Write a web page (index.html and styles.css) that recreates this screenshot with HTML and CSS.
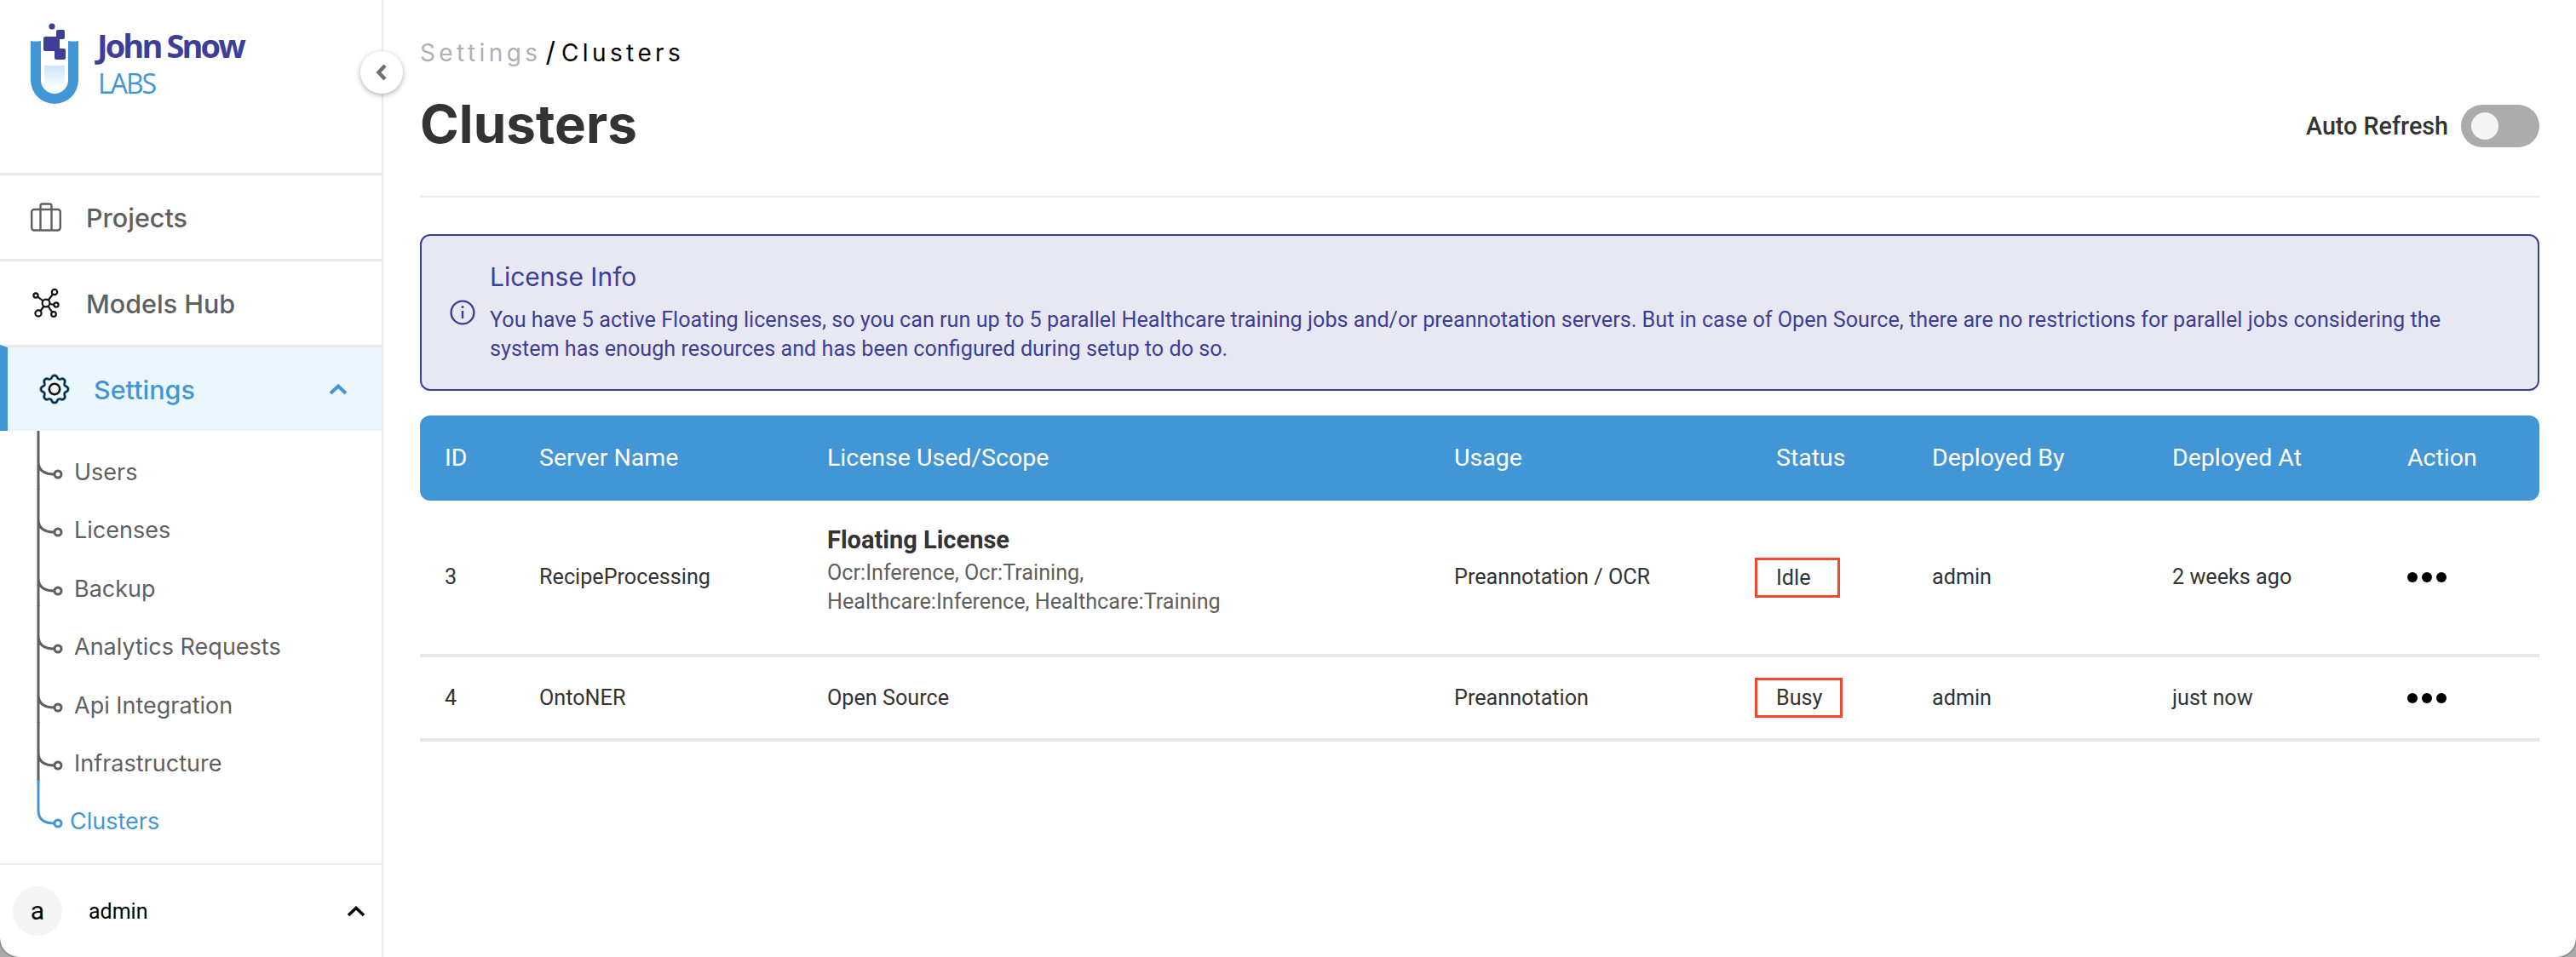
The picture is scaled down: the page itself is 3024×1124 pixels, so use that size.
FILE: index.html
```html
<!DOCTYPE html>
<html>
<head>
  <meta charset="UTF-8">
  <title>Clusters</title>
  <link rel="stylesheet" href="styles.css">
</head>
<body>
<div class="page">
  <aside class="sidebar">
    <div class="logo">
      <svg class="logo-mark" viewBox="0 0 60 100" width="60" height="100">
        <defs>
          <linearGradient id="liquid" x1="0" y1="0" x2="0" y2="1">
            <stop offset="0" stop-color="#cbe4f6"/>
            <stop offset="1" stop-color="#ffffff"/>
          </linearGradient>
        </defs>
        <path d="M2 23 Q8 24 14 23 V69 A16 16 0 0 0 46 69 V23 Q52 24 58 23 V69 A28 28 0 0 1 2 69 Z" fill="#4396d6"/>
        <rect x="18" y="52" width="24" height="28" fill="url(#liquid)"/>
        <circle cx="27" cy="6" r="3.6" fill="#3d3f96"/>
        <path d="M34 10 H40 Q42 10 42 12 V19 Q42 21 40 21 H36 V32 H41 Q43 32 43 34 V43 Q43 45 41 45 H32 Q30 45 30 43 V35 H19 Q17 35 17 33 V20 Q17 18 19 18 H32 V12 Q32 10 34 10 Z" fill="#3d3f96"/>
      </svg>
      <div class="logo-text">
        <div class="logo-name">John Snow</div>
        <div class="logo-labs">LABS</div>
      </div>
    </div>

    <nav class="nav">
      <a class="nav-item">
        <svg class="nav-icon" viewBox="0 0 36 34" width="36" height="34" fill="none" stroke="#5f5f5f" stroke-width="2.4">
          <rect x="1.2" y="8" width="33.6" height="24.5" rx="3"/>
          <path d="M11.5 8 V4 Q11.5 1.5 14 1.5 H22 Q24.5 1.5 24.5 4 V8 M11.5 8 V32.5 M24.5 8 V32.5"/>
        </svg>
        <span>Projects</span>
      </a>
      <a class="nav-item">
        <svg class="nav-icon" viewBox="0 0 36 36" width="36" height="36" fill="none" stroke="#111" stroke-width="2.2">
          <path d="M18 18 L7.5 10 M18 18 L26.5 7 M18 18 L27.5 20 M18 18 L25.5 29 M18 18 L11 28"/>
          <circle cx="18" cy="18" r="4.4" fill="#fff"/>
          <circle cx="6" cy="9" r="2.6" fill="#fff"/>
          <circle cx="28" cy="5" r="3.2" fill="#fff"/>
          <circle cx="30" cy="20" r="2.6" fill="#fff"/>
          <circle cx="27" cy="31" r="2.8" fill="#fff"/>
          <circle cx="9" cy="30" r="3.6" fill="#fff"/>
        </svg>
        <span>Models Hub</span>
      </a>
      <a class="nav-item nav-item-active">
        <svg class="nav-icon" viewBox="0 0 36 36" width="36" height="36" fill="none">
          <g stroke="#4396d6" stroke-width="3.4">
            <path d="M31.64 14.85 A3.3 3.3 0 0 1 31.64 21.15 A3 3 0 0 0 29.87 25.42 A3.3 3.3 0 0 1 25.42 29.87 A3 3 0 0 0 21.15 31.64 A3.3 3.3 0 0 1 14.85 31.64 A3 3 0 0 0 10.58 29.87 A3.3 3.3 0 0 1 6.13 25.42 A3 3 0 0 0 4.36 21.15 A3.3 3.3 0 0 1 4.36 14.85 A3 3 0 0 0 6.13 10.58 A3.3 3.3 0 0 1 10.58 6.13 A3 3 0 0 0 14.85 4.36 A3.3 3.3 0 0 1 21.15 4.36 A3 3 0 0 0 25.42 6.13 A3.3 3.3 0 0 1 29.87 10.58 A3 3 0 0 0 31.64 14.85 Z"/>
          </g>
          <g stroke="#111" stroke-width="1.6">
            <path d="M31.64 14.85 A3.3 3.3 0 0 1 31.64 21.15 A3 3 0 0 0 29.87 25.42 A3.3 3.3 0 0 1 25.42 29.87 A3 3 0 0 0 21.15 31.64 A3.3 3.3 0 0 1 14.85 31.64 A3 3 0 0 0 10.58 29.87 A3.3 3.3 0 0 1 6.13 25.42 A3 3 0 0 0 4.36 21.15 A3.3 3.3 0 0 1 4.36 14.85 A3 3 0 0 0 6.13 10.58 A3.3 3.3 0 0 1 10.58 6.13 A3 3 0 0 0 14.85 4.36 A3.3 3.3 0 0 1 21.15 4.36 A3 3 0 0 0 25.42 6.13 A3.3 3.3 0 0 1 29.87 10.58 A3 3 0 0 0 31.64 14.85 Z"/>
          </g>
          <circle cx="18" cy="18" r="6.2" stroke="#111" stroke-width="2.6"/>
        </svg>
        <span>Settings</span>
        <svg class="nav-chevron" viewBox="0 0 22 14" width="22" height="14" fill="none" stroke="#4396d6" stroke-width="4">
          <path d="M2 12 L11 3.5 L20 12"/>
        </svg>
      </a>
    </nav>

    <ul class="subnav">
      <li class="subnav-item">
        <svg class="tree" viewBox="0 0 36 69" width="36" height="69" fill="none" stroke="#5f5f5f" stroke-width="3"><path d="M5 0 V69 M5 36 C5 47 12 51 24 51"/><circle cx="28" cy="51" r="4" fill="#fff"/></svg>
        Users
      </li>
      <li class="subnav-item">
        <svg class="tree" viewBox="0 0 36 69" width="36" height="69" fill="none" stroke="#5f5f5f" stroke-width="3"><path d="M5 0 V69 M5 36 C5 47 12 51 24 51"/><circle cx="28" cy="51" r="4" fill="#fff"/></svg>
        Licenses
      </li>
      <li class="subnav-item">
        <svg class="tree" viewBox="0 0 36 69" width="36" height="69" fill="none" stroke="#5f5f5f" stroke-width="3"><path d="M5 0 V69 M5 36 C5 47 12 51 24 51"/><circle cx="28" cy="51" r="4" fill="#fff"/></svg>
        Backup
      </li>
      <li class="subnav-item">
        <svg class="tree" viewBox="0 0 36 69" width="36" height="69" fill="none" stroke="#5f5f5f" stroke-width="3"><path d="M5 0 V69 M5 36 C5 47 12 51 24 51"/><circle cx="28" cy="51" r="4" fill="#fff"/></svg>
        Analytics Requests
      </li>
      <li class="subnav-item">
        <svg class="tree" viewBox="0 0 36 69" width="36" height="69" fill="none" stroke="#5f5f5f" stroke-width="3"><path d="M5 0 V69 M5 36 C5 47 12 51 24 51"/><circle cx="28" cy="51" r="4" fill="#fff"/></svg>
        Api Integration
      </li>
      <li class="subnav-item">
        <svg class="tree" viewBox="0 0 36 69" width="36" height="69" fill="none" stroke="#5f5f5f" stroke-width="3"><path d="M5 0 V69 M5 36 C5 47 12 51 24 51"/><circle cx="28" cy="51" r="4" fill="#fff"/></svg>
        Infrastructure
      </li>
      <li class="subnav-item subnav-item-active">
        <svg class="tree" viewBox="0 0 36 69" width="36" height="69" fill="none" stroke="#4396d6" stroke-width="3"><path d="M5 0 V36 C5 47 12 51 24 51"/><circle cx="28" cy="51" r="4" fill="#fff"/></svg>
        Clusters
      </li>
    </ul>

    <div class="user">
      <div class="avatar">a</div>
      <div class="user-name">admin</div>
      <svg class="user-chevron" viewBox="0 0 22 14" width="22" height="14" fill="none" stroke="#000" stroke-width="3.6">
        <path d="M2 12 L11 3.5 L20 12"/>
      </svg>
    </div>
  </aside>

  <button class="collapse">
    <svg viewBox="0 0 14 20" width="14" height="20" fill="none" stroke="#6f6f6f" stroke-width="4.4"><path d="M11 2 L3.5 10 L11 18"/></svg>
  </button>

  <main class="content">
    <div class="breadcrumb"><span class="crumb-muted">Settings</span><span class="crumb-sep">/</span><span>Clusters</span></div>

    <div class="title-row">
      <h1>Clusters</h1>
      <div class="refresh">
        <span>Auto Refresh</span>
        <div class="toggle"><div class="toggle-knob"></div></div>
      </div>
    </div>

    <div class="alert">
      <svg class="alert-icon" viewBox="0 0 30 30" width="30" height="30" fill="none" stroke="#3d3f96" stroke-width="2.4">
        <circle cx="15" cy="15" r="13.4"/>
        <path d="M15 13 V22"/>
        <circle cx="15" cy="8.6" r="1.5" fill="#3d3f96" stroke="none"/>
      </svg>
      <div>
        <div class="alert-title">License Info</div>
        <p class="alert-text">You have 5 active Floating licenses, so you can run up to 5 parallel Healthcare training jobs and/or preannotation servers. But in case of Open Source, there are no restrictions for parallel jobs considering the system has enough resources and has been configured during setup to do so.</p>
      </div>
    </div>

    <table class="table">
      <colgroup>
        <col class="col-id"><col class="col-name"><col class="col-license"><col class="col-usage">
        <col class="col-status"><col class="col-by"><col class="col-at"><col class="col-action">
      </colgroup>
      <thead>
        <tr>
          <th>ID</th><th>Server Name</th><th>License Used/Scope</th><th>Usage</th>
          <th>Status</th><th>Deployed By</th><th>Deployed At</th><th>Action</th>
        </tr>
      </thead>
      <tbody>
        <tr class="row-tall">
          <td>3</td>
          <td>RecipeProcessing</td>
          <td>
            <div class="license">
              <div class="license-name">Floating License</div>
              <div class="license-scope">Ocr:Inference, Ocr:Training,<br>Healthcare:Inference, Healthcare:Training</div>
            </div>
          </td>
          <td>Preannotation / OCR</td>
          <td class="cell-status"><span class="status">Idle</span></td>
          <td>admin</td>
          <td>2 weeks ago</td>
          <td><div class="dots"><span></span><span></span><span></span></div></td>
        </tr>
        <tr class="row-short">
          <td>4</td>
          <td>OntoNER</td>
          <td>Open Source</td>
          <td>Preannotation</td>
          <td class="cell-status"><span class="status">Busy</span></td>
          <td>admin</td>
          <td>just now</td>
          <td><div class="dots"><span></span><span></span><span></span></div></td>
        </tr>
      </tbody>
    </table>
  </main>
</div>
</body>
</html>
```

FILE: styles.css
```css
html {
  background-color: #a9a9a9;
}
body {
  margin: 0;
  font-family: Roboto, "Liberation Sans", sans-serif;
  color: #333;
}
.page {
  display: flex;
  position: relative;
  height: 1124px;
  background-color: #fff;
  border-radius: 0 0 22px 22px;
  box-shadow: 0 0 2px #000;
  overflow: hidden;
}

/* sidebar */
.sidebar {
  display: flex;
  flex-direction: column;
  flex: none;
  width: 448px;
  border-right: 2px solid #ececec;
  font-family: Inter, "Noto Sans", sans-serif;
}
.logo {
  display: flex;
  height: 203px;
  padding: 25px 0 0 34px;
  box-sizing: border-box;
}
.logo-text {
  margin: 9px 0 0 20px;
  font-family: "Open Sans", sans-serif;
}
.logo-name {
  font-size: 38px;
  line-height: 38px;
  font-weight: 700;
  letter-spacing: -2.9px;
  color: #3d3f96;
}
.logo-labs {
  margin-top: 7px;
  padding-left: 1px;
  font-size: 32px;
  line-height: 38px;
  letter-spacing: -2px;
  color: #4396d6;
}
.nav-item {
  display: flex;
  align-items: center;
  box-sizing: border-box;
  height: 101px;
  padding-left: 36px;
  border-top: 3px solid #e8e8e8;
  font-size: 30.5px;
  font-weight: 500;
  color: #5f5f5f;
}
.nav-item span {
  margin-left: 29px;
}
.nav-item-active {
  padding-left: 37px;
  border-left: 9px solid #4396d6;
  background-color: #ebf7fd;
  color: #4396d6;
}
.nav-item-active span {
  margin-left: 28px;
}
.nav-chevron {
  margin: 0 40px 0 auto;
}
.subnav {
  margin: 0;
  padding: 0;
  list-style: none;
}
.subnav-item {
  position: relative;
  box-sizing: border-box;
  height: 68.4px;
  padding: 32px 0 0 87px;
  font-size: 27px;
  line-height: 34px;
  color: #5f5f5f;
}
.subnav-item-active {
  padding-left: 82px;
  color: #4396d6;
}
.tree {
  position: absolute;
  top: 0;
  left: 40px;
}
.user {
  display: flex;
  align-items: center;
  margin-top: auto;
  height: 110px;
  padding-left: 15px;
  border-top: 2px solid #ececec;
  box-sizing: border-box;
  font-family: Roboto, sans-serif;
  color: #000;
}
.avatar {
  width: 58px;
  height: 58px;
  border-radius: 50%;
  background-color: #f5f5f5;
  font-size: 30px;
  line-height: 58px;
  text-align: center;
}
.user-name {
  margin-left: 31px;
  font-size: 25px;
}
.user-chevron {
  margin: 0 19px 0 auto;
}
.collapse {
  position: absolute;
  top: 60px;
  left: 423px;
  width: 50px;
  height: 50px;
  padding: 0;
  border: 0;
  border-radius: 50%;
  background-color: #fff;
  box-shadow: 0 2px 6px rgba(0, 0, 0, 0.3);
}
.collapse svg {
  display: block;
  margin: 0 auto;
}

/* content */
.content {
  flex: 1;
  min-width: 0;
  padding: 44px 43px 0 43px;
}
.breadcrumb {
  font-family: Inter, sans-serif;
  font-size: 28px;
  line-height: 36px;
  letter-spacing: 4.4px;
  color: #000;
}
.crumb-muted {
  color: #b0b0b0;
}
.crumb-sep {
  margin: 0 7px 0 5px;
  font-size: 32px;
  line-height: 1;
  letter-spacing: 0;
}
.title-row {
  display: flex;
  align-items: center;
  justify-content: space-between;
  margin-top: 43px;
  padding-bottom: 57px;
  border-bottom: 2px solid #ececec;
}
h1 {
  margin: 0;
  padding-bottom: 4px;
  font-family: Inter, sans-serif;
  font-size: 62px;
  line-height: 46px;
  font-weight: 700;
  color: #333;
}
.refresh {
  display: flex;
  align-items: center;
  font-size: 28.7px;
  font-weight: 500;
  color: #333;
}
.toggle {
  width: 92px;
  height: 50px;
  margin-left: 15px;
  border-radius: 25px;
  background-color: #acacac;
  display: flex;
  align-items: center;
  padding-left: 12px;
  box-sizing: border-box;
}
.toggle-knob {
  width: 32px;
  height: 32px;
  border-radius: 50%;
  background-color: #f5f5f5;
}
.alert {
  display: flex;
  box-sizing: border-box;
  height: 184px;
  margin-top: 43px;
  padding: 28px 60px 0 33px;
  border: 2px solid #3d3f96;
  border-radius: 12px;
  background-color: #e8e8f2;
  color: #3d3f96;
}
.alert-icon {
  flex: none;
  margin: 47px 17px 0 0;
}
.alert-title {
  font-family: Inter, sans-serif;
  font-size: 30px;
  line-height: 40px;
}
.alert-text {
  margin: 14px 0 0;
  font-size: 25.2px;
  line-height: 34px;
}
.table {
  width: 100%;
  margin-top: 29px;
  border-collapse: separate;
  border-spacing: 0;
  table-layout: fixed;
  font-size: 25.2px;
}
.col-id { width: 111px; }
.col-name { width: 338px; }
.col-license { width: 736px; }
.col-usage { width: 378px; }
.col-status { width: 183px; }
.col-by { width: 282px; }
.col-at { width: 276px; }
.table th {
  height: 100px;
  padding: 0 0 2px 29px;
  box-sizing: border-box;
  background-color: #4396d6;
  color: #fff;
  font-size: 28.5px;
  font-weight: 400;
  text-align: left;
}
.table th:first-child {
  border-radius: 12px 0 0 12px;
}
.table th:last-child {
  border-radius: 0 12px 12px 0;
}
.table td {
  box-sizing: border-box;
  padding: 0 0 0 29px;
  border-bottom: 4px solid #e8e8e8;
  line-height: 34px;
}
.row-tall td {
  height: 184px;
}
.row-short td {
  height: 99px;
}
.license {
  padding-bottom: 16px;
}
.license-name {
  margin-bottom: 4px;
  font-size: 29px;
  font-weight: 700;
  line-height: 36px;
}
.license-scope {
  color: #5f5f5f;
}
.table td.cell-status {
  padding-left: 4px;
}
.status {
  display: inline-block;
  min-width: 52px;
  padding: 2px 20px 2px 22px;
  border: 3px solid #ef4a2c;
  line-height: 37px;
  color: #333;
}
.dots {
  display: flex;
  gap: 5px;
}
.dots span {
  width: 12px;
  height: 12px;
  border-radius: 50%;
  background-color: #000;
}
```
